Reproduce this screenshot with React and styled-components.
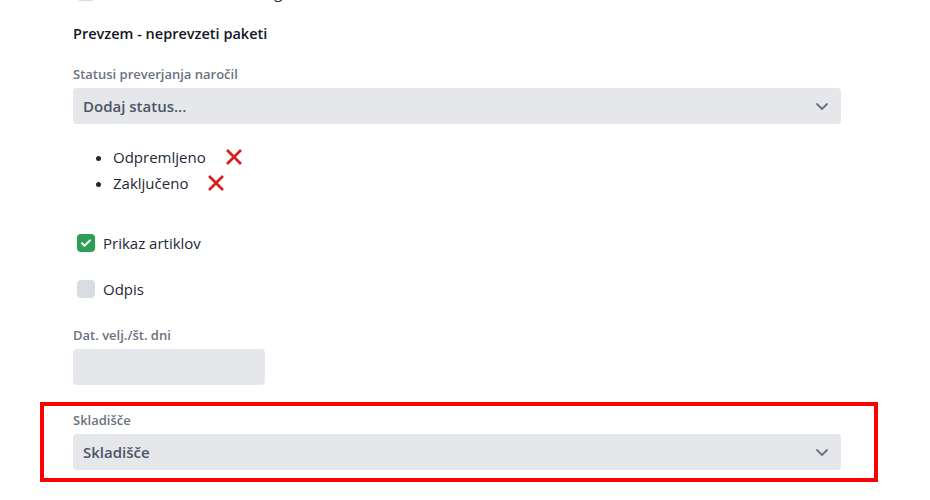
import styled, { createGlobalStyle } from "styled-components";

const GlobalStyle = createGlobalStyle`
  body {
    margin: 0;
    background: #fff;
    font-family: "Open Sans", "Noto Sans", sans-serif;
    color: #1f2937;
  }
`;

const Page = styled.div`
  width: 768px;
  padding-left: 73px;
  margin-top: -20px;
`;

const CheckRow = styled.label`
  display: flex;
  align-items: center;
  gap: 8px;
  height: 24px;
  margin-bottom: ${(p) => p.$mb || 0}px;
  margin-left: 4px;
  font-size: 15px;
  color: #1f2937;
`;

const Box = styled.span`
  width: 18px;
  height: 18px;
  border-radius: 4px;
  background: ${(p) => (p.$checked ? "#2f9e55" : "#d9dde2")};
  display: flex;
  align-items: center;
  justify-content: center;
`;

const Heading = styled.h3`
  margin: 0 0 21px;
  font-size: 14.5px;
  line-height: 20px;
  font-weight: 600;
  color: #111827;
`;

const Label = styled.div`
  font-size: 13px;
  line-height: 18px;
  font-weight: 600;
  color: #6b7280;
  margin-bottom: 5px;
`;

const Select = styled.div`
  height: 36px;
  width: ${(p) => p.$width || "100%"};
  box-sizing: border-box;
  border-radius: 4px;
  background: #e5e7eb;
  display: flex;
  align-items: center;
  justify-content: space-between;
  padding: 0 12px 0 10px;
  font-size: 15px;
  font-weight: 600;
  color: #4b5563;
`;

const List = styled.ul`
  margin: 20px 0 35px;
  padding-left: 40px;
  font-size: 15px;
  line-height: 26px;
  color: #1f2937;
`;

const Item = styled.li`
  & > span {
    display: inline-flex;
    align-items: center;
  }
`;

const Remove = styled.button`
  border: 0;
  background: none;
  padding: 0;
  margin-left: 20px;
  display: inline-flex;
  cursor: pointer;
`;

const Field = styled.div`
  margin-top: ${(p) => p.$mt || 0}px;
`;

const Highlight = styled.div`
  margin: 17px -37px 0 -33px;
  padding: 5px 33px 8px 29px;
  border: 4px solid #ff0000;
`;

const Chevron = () => (
  <svg width="14" height="14" viewBox="0 0 14 14" fill="none">
    <path d="M2 5l5 5 5-5" stroke="#6b7280" strokeWidth="1.8" strokeLinecap="round" strokeLinejoin="round" />
  </svg>
);

const Cross = () => (
  <svg width="16" height="16" viewBox="0 0 16 16">
    <path d="M2 2l12 12M14 2L2 14" stroke="#d42020" strokeWidth="2.8" strokeLinecap="square" />
  </svg>
);

const Check = () => (
  <svg width="12" height="12" viewBox="0 0 12 12" fill="none">
    <path d="M2 6.3l2.6 2.5L10 3.4" stroke="#fff" strokeWidth="2" strokeLinecap="round" strokeLinejoin="round" />
  </svg>
);

const statuses = ["Odpremljeno", "Zaključeno"];

const App = () => {
  return (
    <>
      <GlobalStyle />
      <Page>
        <CheckRow $mb={20}>
          <Box />
          Prikaz naslova dostave ng
        </CheckRow>
        <Heading>Prevzem - neprevzeti paketi</Heading>
        <Field>
          <Label>Statusi preverjanja naročil</Label>
          <Select>
            Dodaj status...
            <Chevron />
          </Select>
        </Field>
        <List>
          {statuses.map((s) => (
            <Item key={s}>
              <span>
                {s}
                <Remove>
                  <Cross />
                </Remove>
              </span>
            </Item>
          ))}
        </List>
        <CheckRow $mb={22}>
          <Box $checked>
            <Check />
          </Box>
          Prikaz artiklov
        </CheckRow>
        <CheckRow>
          <Box />
          Odpis
        </CheckRow>
        <Field $mt={25}>
          <Label>Dat. velj./št. dni</Label>
          <Select $width="192px" />
        </Field>
        <Highlight>
          <Label>Skladišče</Label>
          <Select>
            Skladišče
            <Chevron />
          </Select>
        </Highlight>
      </Page>
    </>
  );
};

export default App;
